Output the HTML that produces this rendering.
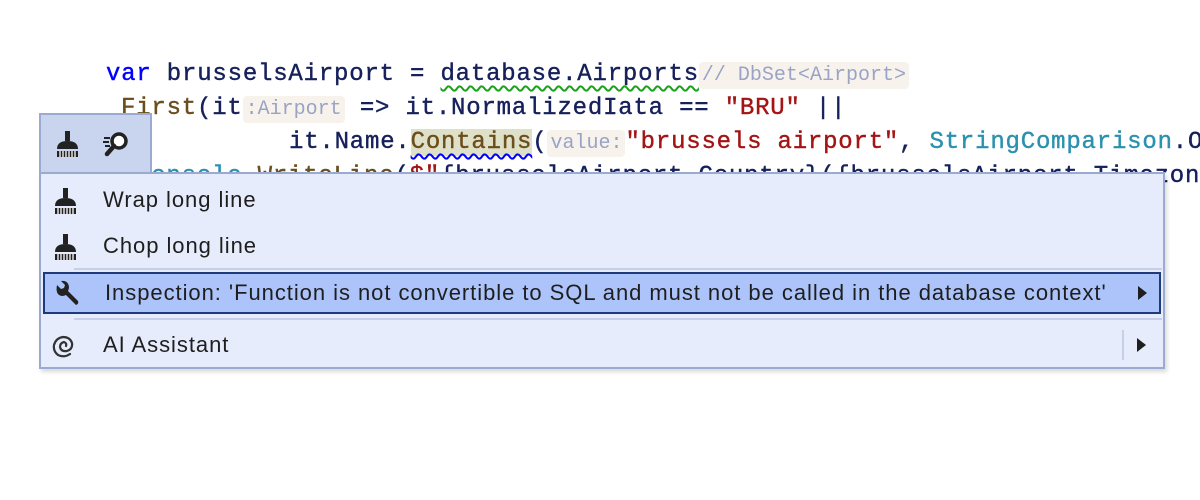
<!DOCTYPE html>
<html><head><meta charset="utf-8"><style>
body{margin:0;width:1200px;height:500px;background:#fff;position:relative;overflow:hidden}
.wrap{position:absolute;left:0;top:0;width:1200px;height:500px;overflow:hidden}
.code{position:absolute;font-family:"Liberation Mono","DejaVu Sans Mono",monospace;font-size:24px;letter-spacing:0.8px;white-space:pre;color:#16205a;line-height:34px;-webkit-text-stroke:0.4px currentColor}
.kw{color:#0000ff}.m{color:#6b4e1e}.s{color:#a31515}.t{color:#2b91af}
.hint{background:#f7f3ec;color:#9aa3c5;font-size:20px;letter-spacing:0;border-radius:4px;padding:2px 3px;-webkit-text-stroke:0}
.wg{text-decoration:underline wavy #1aa31a;text-decoration-thickness:1.5px;text-underline-offset:5px}
.wb{text-decoration:underline wavy #0000ff;text-decoration-thickness:1.5px;text-underline-offset:5px}
.tb{position:absolute;left:39px;top:113px;width:113px;height:60px;background:#c9d4ef;border:2px solid #9aaad0;border-bottom:none;box-sizing:border-box}
.menu{position:absolute;left:39px;top:172px;width:1126px;height:197px;background:#e6ecfb;border:2px solid #9aaad0;box-sizing:border-box;box-shadow:2px 3px 4px rgba(0,0,0,.15)}
.item{position:absolute;left:0;width:1122px;height:42px;font-family:"Liberation Sans","DejaVu Sans",sans-serif;font-size:22px;letter-spacing:0.95px;color:#1e1e1e;line-height:42px;white-space:nowrap}
.item span.l{position:absolute;left:62px}
.ic{position:absolute;left:10px;top:8px}
.sep{position:absolute;left:33px;width:1088px;height:2px;background:#c5d0e8}
.sel{left:2px;width:1118px;background:#adc4fb;border:2px solid #1f3a7a;box-sizing:border-box;line-height:38px}
.arr{position:absolute;width:0;height:0;border-top:7px solid transparent;border-bottom:7px solid transparent;border-left:9px solid #1e1e1e}
</style></head><body><div class="wrap">
<div class="code" style="left:106px;top:58px"><span class="kw">var</span> brusselsAirport = <span class="wg">database.Airports</span><span class="hint">// DbSet&lt;Airport&gt;</span></div>
<div class="code" style="left:121px;top:92px"><span class="m">First</span>(it<span class="hint">:Airport</span> =&gt; it.NormalizedIata == <span class="s">"BRU"</span> ||</div>
<div class="code" style="left:289px;top:126px">it.Name.<span class="m wb" style="background:#dfe0c8">Contains</span>(<span class="hint">value:</span><span class="s">"brussels airport"</span>, <span class="t">StringComparison</span>.OrdinalIgnoreCase));</div>
<div class="code" style="left:136px;top:160px"><span class="t">Console</span>.<span class="m">WriteLine</span>(<span class="s">$"</span>{brusselsAirport.Country}({brusselsAirport.Timezone</div>

<div class="tb">
<svg style="position:absolute;left:12px;top:15px" width="30" height="30" viewBox="0 0 30 30"><rect x="12" y="1" width="5" height="10" fill="#222"/><path d="M4 19 Q4 11 14.5 11 Q25 11 25 19Z" fill="#222"/><path d="M4 21h21v6H4z" fill="#222"/><path d="M7 21v6M10 21v6M13 21v6M16 21v6M19 21v6M22 21v6" stroke="#fff" stroke-width="1.3"/></svg>
<svg style="position:absolute;left:60px;top:14px" width="32" height="32" viewBox="0 0 32 32"><path d="M3 9h6M2 13h6M4 17h5" stroke="#222" stroke-width="2"/><circle cx="18" cy="12" r="7" fill="#fff" stroke="#222" stroke-width="3.5"/><path d="M13 17 L6 25" stroke="#222" stroke-width="4.5" stroke-linecap="round"/></svg>
</div>
<div class="menu">
<div class="item" style="top:5px"><svg class="ic" width="30" height="30" viewBox="0 0 30 30"><rect x="12" y="1" width="5" height="10" fill="#222"/><path d="M4 19 Q4 11 14.5 11 Q25 11 25 19Z" fill="#222"/><path d="M4 21h21v6H4z" fill="#222"/><path d="M7 21v6M10 21v6M13 21v6M16 21v6M19 21v6M22 21v6" stroke="#fff" stroke-width="1.3"/></svg><span class="l">Wrap long line</span></div>
<div class="item" style="top:51px"><svg class="ic" width="30" height="30" viewBox="0 0 30 30"><rect x="12" y="1" width="5" height="10" fill="#222"/><path d="M4 19 Q4 11 14.5 11 Q25 11 25 19Z" fill="#222"/><path d="M4 21h21v6H4z" fill="#222"/><path d="M7 21v6M10 21v6M13 21v6M16 21v6M19 21v6M22 21v6" stroke="#fff" stroke-width="1.3"/></svg><span class="l">Chop long line</span></div>
<div class="sep" style="top:94px"></div>
<div class="item sel" style="top:98px"><svg class="ic" style="left:8px;top:6px" width="28" height="28" viewBox="0 0 28 28"><path d="M4 5 L8 9 L11 8 L12 5 L8 1 Q15 0 16 7 Q16 9 15 11 L25 21 Q26 24 23 25 L13 15 Q11 16 9 16 Q2 15 4 5Z" fill="#222"/></svg><span class="l" style="left:60px">Inspection: 'Function is not convertible to SQL and must not be called in the database context'</span><div class="arr" style="left:1093px;top:12px"></div></div>
<div class="sep" style="top:144px"></div>
<div class="item" style="top:150px"><svg class="ic" style="top:9px" width="26" height="26" viewBox="0 0 26 26"><path d="M19 21 Q13 25 7 22 Q2 18 3 12 Q5 5 12 4 Q19 4 21 10 Q22 16 16 18 Q10 19 9 14 Q9 10 13 9 Q16 10 15 13" fill="none" stroke="#333" stroke-width="2.2" stroke-linecap="round"/></svg><span class="l">AI Assistant</span><div style="position:absolute;left:1081px;top:6px;width:2px;height:30px;background:#c5d0e8"></div><div class="arr" style="left:1096px;top:14px"></div></div>
</div>
</div></body></html>
